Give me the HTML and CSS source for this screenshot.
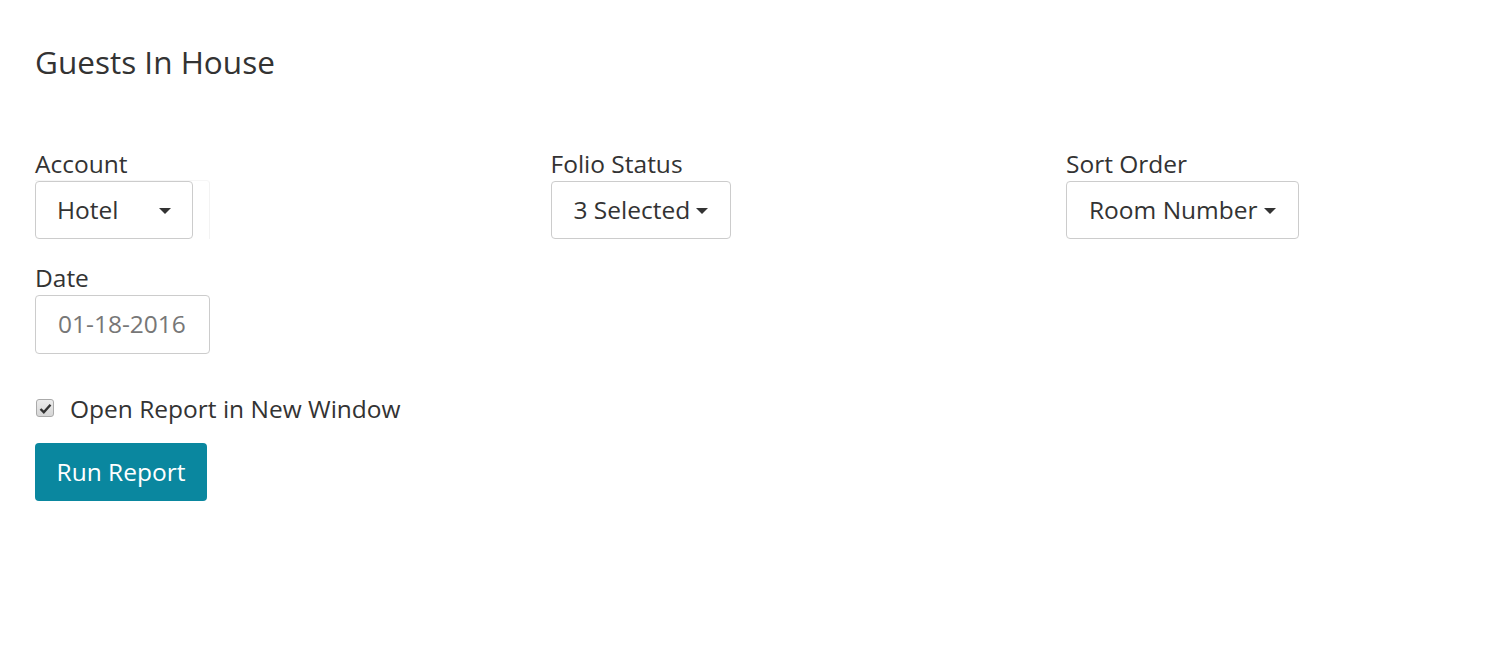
FILE: index.html
```html
<!DOCTYPE html>
<html>
<head>
<meta charset="utf-8">
<link rel="stylesheet" href="styles.css">
</head>
<body>
<div class="page">
  <h3 class="title">Guests In House</h3>
  <div class="grid">
    <div class="field">
      <label class="label">Account</label>
      <div class="select-wrap">
        <button class="dropdown account">Hotel<span class="caret"></span></button>
      </div>
    </div>
    <div class="field">
      <label class="label">Folio Status</label>
      <button class="dropdown">3 Selected<span class="caret"></span></button>
    </div>
    <div class="field">
      <label class="label">Sort Order</label>
      <button class="dropdown">Room Number<span class="caret"></span></button>
    </div>
    <div class="field">
      <label class="label">Date</label>
      <div class="input">01-18-2016</div>
    </div>
  </div>
  <div class="check-row">
    <span class="checkbox"><svg width="13" height="11" viewBox="0 0 13 11"><path d="M1.5 6 L4.8 9.2 L11.5 1.8" fill="none" stroke="#333" stroke-width="2.4"/></svg></span>
    <span class="check-label">Open Report in New Window</span>
  </div>
  <button class="btn">Run Report</button>
</div>
</body>
</html>
```
FILE: styles.css
```css
* { box-sizing: border-box; }
body {
  margin: 0;
  background: #fff;
  font-family: "Open Sans", "Liberation Sans", sans-serif;
  color: #333;
  font-size: 24.5px;
}
.page {
  padding: 40px 35px 0 35px;
}
.title {
  margin: 0;
  font-size: 31.5px;
  font-weight: 400;
  line-height: 44px;
  color: #333;
}
.grid {
  margin-top: 65px;
  display: grid;
  grid-template-columns: 515.5px 515.5px 515.5px;
  row-gap: 24px;
}
.field {
  display: flex;
  flex-direction: column;
  align-items: flex-start;
}
.label {
  line-height: 30px;
  margin-bottom: 2px;
}
.select-wrap {
  width: 175px;
  border-right: 1px solid #f3f3f3;
  border-top: 1px solid #f6f6f6;
  margin-top: -1px;
  border-radius: 0 4px 0 0;
}
.dropdown {
  height: 58px;
  padding: 0 22px 2px 22px;
  border: 1px solid #ccc;
  border-radius: 4px;
  background: #fff;
  font-family: inherit;
  font-size: 24.5px;
  color: #333;
  display: flex;
  align-items: center;
}
.dropdown.account {
  width: 158px;
  justify-content: space-between;
  padding-left: 21px;
  padding-right: 21px;
}
.caret {
  display: inline-block;
  width: 0;
  height: 0;
  margin-left: 6px;
  border-left: 6px solid transparent;
  border-right: 6px solid transparent;
  border-top: 6px solid #333;
  margin-top: 3px;
}
.input {
  width: 175px;
  height: 59px;
  border: 1px solid #ccc;
  border-radius: 4px;
  padding: 0 22px 2px 22px;
  display: flex;
  align-items: center;
  color: #777;
}
.check-row {
  margin-top: 39px;
  display: flex;
  align-items: center;
  height: 30px;
}
.checkbox {
  width: 18px;
  height: 18px;
  margin-left: 1px;
  border: 1px solid #aaa;
  border-radius: 3px;
  background: linear-gradient(#ececec, #d6d6d6);
  display: flex;
  align-items: center;
  justify-content: center;
}
.check-label {
  margin-left: 16px;
}
.btn {
  margin-top: 20px;
  width: 172px;
  height: 58px;
  border: none;
  border-radius: 4px;
  background: #0a879f;
  color: #fff;
  font-family: inherit;
  font-size: 24.5px;
  padding: 0 0 2px 0;
}
```
